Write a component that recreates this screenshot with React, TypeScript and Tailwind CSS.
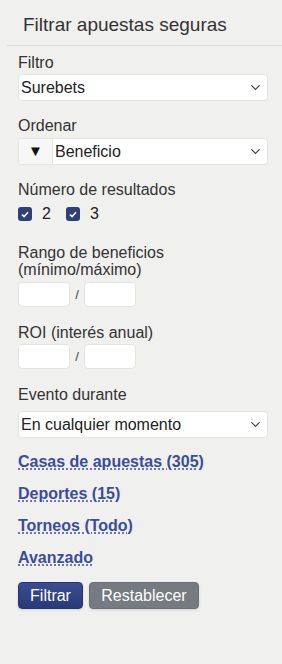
import { ChevronDown } from "lucide-react";

function Label({ children }: { children: React.ReactNode }) {
  return <div className="text-[16px] leading-[17px] text-[#333]">{children}</div>;
}

function Select({ value }: { value: string }) {
  return (
    <div className="flex h-[27px] items-center justify-between rounded-[4px] border border-[#e4e4e4] bg-white pl-[2px] pr-[4px] text-[16px] text-[#222]">
      <span>{value}</span>
      <ChevronDown size={15} strokeWidth={2} className="text-[#444]" />
    </div>
  );
}

function RangeInputs() {
  return (
    <div className="flex items-center">
      <div className="h-[25px] w-[52px] rounded-[4px] border border-[#e4e4e4] bg-white" />
      <span className="w-[14px] text-center text-[13px] text-[#444]">/</span>
      <div className="h-[25px] w-[52px] rounded-[4px] border border-[#e4e4e4] bg-white" />
    </div>
  );
}

function Check({ label }: { label: string }) {
  return (
    <span className="flex items-center gap-[10px]">
      <span className="flex h-[14px] w-[14px] items-center justify-center rounded-[3px] bg-[#2f3f7a]">
        <svg width="8" height="7" viewBox="0 0 8 7">
          <path d="M1 3.6 L3.1 5.6 L7 1.3" fill="none" stroke="white" strokeWidth="1.6" />
        </svg>
      </span>
      <span className="text-[16px] leading-[18px] text-[#222]">{label}</span>
    </span>
  );
}

function LinkItem({ label }: { label: string }) {
  return (
    <div className="leading-[18px]">
      <a className="text-[16px] font-bold text-[#3a4c9e] underline decoration-dotted decoration-[#3a4c9e] underline-offset-[2px]">
        {label}
      </a>
    </div>
  );
}

export default function App() {
  return (
    <div
      className="min-h-[664px] w-[282px] bg-[#f0f0ee] pt-[14px]"
      style={{ fontFamily: '"Liberation Sans", Arial, sans-serif' }}
    >
      <h2 className="pl-[23px] text-[19px] leading-[22px] text-[#333]">Filtrar apuestas seguras</h2>
      <div className="ml-[7px] mt-[9px] border-t border-[#dcdcda]" />

      <div className="pl-[18px] pr-[14px] pt-[8px]">
        <Label>Filtro</Label>
        <div className="mt-[3px]">
          <Select value="Surebets" />
        </div>

        <div className="mt-[16px]">
          <Label>Ordenar</Label>
        </div>
        <div className="mt-[4px] flex h-[27px] rounded-[4px] border border-[#e4e4e4] bg-white">
          <div className="flex w-[34px] items-center justify-center rounded-l-[4px] border-r border-[#e4e4e4] bg-[#f7f7f7] text-[15px] text-[#111]">
            ▼
          </div>
          <div className="flex flex-1 items-center justify-between pl-[2px] pr-[4px] text-[16px] text-[#222]">
            <span>Beneficio</span>
            <ChevronDown size={15} strokeWidth={2} className="text-[#444]" />
          </div>
        </div>

        <div className="mt-[16px]">
          <Label>Número de resultados</Label>
        </div>
        <div className="mt-[7px] flex gap-[15px]">
          <Check label="2" />
          <Check label="3" />
        </div>

        <div className="mt-[21px]">
          <Label>
            Rango de beneficios
            <br />
            (mínimo/máximo)
          </Label>
        </div>
        <div className="mt-[4px]">
          <RangeInputs />
        </div>

        <div className="mt-[17px]">
          <Label>ROI (interés anual)</Label>
        </div>
        <div className="mt-[3px]">
          <RangeInputs />
        </div>

        <div className="mt-[17px]">
          <Label>Evento durante</Label>
        </div>
        <div className="mt-[8px]">
          <Select value="En cualquier momento" />
        </div>

        <div className="mt-[15px] flex flex-col gap-[14px]">
          <LinkItem label="Casas de apuestas (305)" />
          <LinkItem label="Deportes (15)" />
          <LinkItem label="Torneos (Todo)" />
          <LinkItem label="Avanzado" />
        </div>

        <div className="mt-[15px] flex gap-[6px]">
          <button className="h-[27px] w-[65px] rounded-[4px] border border-[#263472] bg-gradient-to-b from-[#3b4d90] to-[#2a3a78] text-[16px] text-white shadow-sm">
            Filtrar
          </button>
          <button className="h-[27px] w-[110px] rounded-[4px] border border-[#6a7076] bg-[#757b81] text-[16px] text-white shadow-sm">
            Restablecer
          </button>
        </div>
      </div>
    </div>
  );
}
